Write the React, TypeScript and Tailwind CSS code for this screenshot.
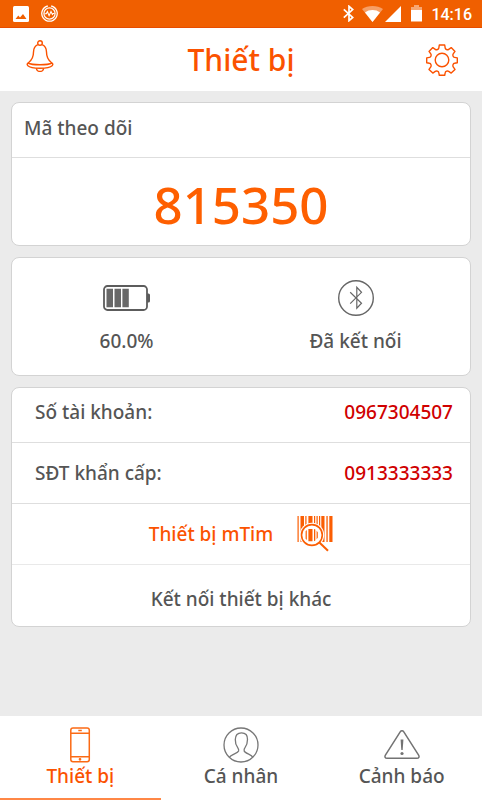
import { useState } from "react"
import type { ReactNode } from "react"

function BellIcon() {
  return (
    <svg className="w-8 h-8" viewBox="0 0 32 32" fill="none" stroke="currentColor" strokeWidth="1.4">
      <circle cx="16" cy="3" r="2.3" />
      <path d="M13.8 4.6C10.8 5.8 9.6 8.6 9.5 12c0 6-1.8 8-4.6 10.2-1.6 1.2-2.2 2.2-1.3 3.2C5.5 27.3 11 28.2 16 28.2s10.500-.9 12.400-2.800c.9-1 .3-2-1.300-3.200-2.800-2.200-4.600-4.200-4.600-10.200-.1-3.400-1.300-6.200-4.300-7.400" />
      <path d="M3.8 23c2.2 1.1 7 1.8 12.2 1.8s10-.7 12.2-1.8" />
      <path d="M12.4 28.2c.2 2 1.7 3.2 3.6 3.2s3.4-1.2 3.6-3.2" />
    </svg>
  )
}

function GearIcon() {
  return (
    <svg className="w-8 h-8" viewBox="0 0 32 32" fill="none" stroke="currentColor" strokeWidth="1.4" strokeLinejoin="round">
      <circle cx="16" cy="16" r="6.8" />
      <path d="M13.3 1h5.400l.5 3.100c.1.700.6 1.100 1.400 1.400.8.300 1.500.2 2.100-.2l2.500-1.700 3.800 3.800-1.800 2.500c-.4.600-.5 1.300-.2 2.100.3.800.8 1.300 1.500 1.400l2.800.5v4.800l-2.800.6c-.7.1-1.200.6-1.500 1.400-.3.800-.2 1.500.2 2.100l1.800 2.600-3.800 3.700-2.500-1.700c-.6-.4-1.300-.5-2.100-.2-.8.300-1.300.8-1.400 1.500l-.5 2.600h-5.400l-.5-2.600c-.1-.7-.6-1.200-1.400-1.500-.8-.3-1.500-.2-2.100.2l-2.500 1.700L3 25.400l1.800-2.600c.4-.6.5-1.300.2-2.100-.3-.8-.8-1.300-1.500-1.400L.7 18.700v-4.800l2.800-.5c.7-.1 1.200-.6 1.500-1.400.3-.8.2-1.500-.2-2.100L3 7.400l3.800-3.800 2.500 1.700c.6.400 1.300.5 2.100.2.800-.3 1.300-.7 1.400-1.400z" />
    </svg>
  )
}

function BatteryIcon() {
  return (
    <svg className="w-12 h-7" viewBox="1 0 48 28" fill="none">
      <rect x="2" y="2" width="43" height="24" rx="3.5" stroke="#5c5c5c" strokeWidth="1.8" />
      <path d="M45 9.5h1.500a1.500 1.500 0 0 1 1.500 1.500v6a1.500 1.500 0 0 1-1.500 1.500H45z" fill="#5c5c5c" />
      <path d="M4.5 4.8h6.500v18.400H4.500zM12.500 4.800H19v18.400h-6.500zM20.400 4.800h6.400v18.400h-6.400z" fill="#686868" />
    </svg>
  )
}

function BluetoothIcon() {
  return (
    <svg className="w-9 h-9" viewBox="0 0 36 36" fill="none" stroke="#666" strokeWidth="1.2">
      <circle cx="18" cy="18" r="17.3" strokeWidth="1.4" />
      <path d="M12.2 12.3 23.5 23.2l-4.700 5V7.300l4.700 5L12.200 23.700" />
    </svg>
  )
}

function BarcodeIcon() {
  return (
    <svg className="w-9 h-9" viewBox="0 0 36 36">
      <path d="M.5 0h1.200v26H.5zM3.500 0H7v26H3.500zM8.300 0h1.200v26H8.300zM11.400 0h4.100v26h-4.100zM17 0h1.200v26H17zM19.500 0h1.200v26h-1.200zM22 0h1.200v26H22zM24.300 0h3.200v26h-3.200zM29.400 0h1.300v26h-1.300zM32.300 0h3.200v26h-3.200z" fill="#fb5e03" />
      <circle cx="14.9" cy="19" r="12.3" fill="#fff" />
      <path d="M22.4 26.5 31 34.8" stroke="#fff" strokeWidth="5" />
      <circle cx="14.9" cy="19" r="10.400" fill="none" stroke="#fb5e03" strokeWidth="1.600" />
      <path d="M22.4 26.5 31 34.8" stroke="#fb5e03" strokeWidth="2" />
      <path d="M8.600 15.200 9.800 14v10l-1.200-1.200zM11.400 13h4.100v12.300h-4.100zM17 13l1.300.6v11l-1.300.6zM19.600 14.700l1.200 1.500v5.600l-1.200 1.500z" fill="#fb5e03" />
    </svg>
  )
}

function PhoneIcon() {
  return (
    <svg className="w-9 h-9" viewBox="0 0 36 36" fill="none" stroke="#fb6a14" strokeWidth="1.5">
      <rect x="8.8" y="1" width="18.5" height="33.8" rx="2.2" />
      <path d="M9 6.2h18M9 29.8h18" />
      <path d="M16.3 3.5h3.500" />
      <circle cx="18" cy="32.3" r=".6" />
    </svg>
  )
}

function PersonIcon() {
  return (
    <svg className="w-9 h-9" viewBox="0 0 36 36" fill="none" stroke="#777" strokeWidth="1.3">
      <circle cx="18" cy="18" r="17" />
      <path d="M6.4 30.2c.8-1.500 2.200-2 4.200-2.900 2.400-1.100 4.600-1.900 5-3.300.3-1.300-.2-2.400-.9-3.300-1.700-2.200-2.500-5-2.400-8.200.1-4.300 2.200-6.700 6.200-6.700 4.200 0 6.100 2.400 6 6.700 0 3.200-.9 6-2.500 8.200-.7.9-1.100 2-.8 3.300.3 1.400 2.500 2.200 4.900 3.300 1.800.8 2.900 1.400 3.600 2.800" />
    </svg>
  )
}

function WarningIcon() {
  return (
    <svg className="w-9 h-9" viewBox="0 0 36 36" fill="none" stroke="#737373" strokeWidth="1.5" strokeLinejoin="round">
      <path d="M16.2 4.800c.9-1.400 2.700-1.400 3.600 0l14.800 23.400c1 1.600.2 3-1.600 3H3c-1.800 0-2.600-1.400-1.600-3z" />
      <path d="M16.6 12.500h2.800l-.7 10.600h-1.400z" fill="#737373" stroke="none" />
      <circle cx="18" cy="26.5" r="1.6" fill="#737373" stroke="none" />
    </svg>
  )
}

function StatusBar() {
  return (
    <div className="h-7 flex items-center justify-between pl-[13px] pr-[10px] bg-[#f05f00] border-b border-[#e74c00] text-white">
      <div className="flex items-center gap-3">
        <svg className="w-4 h-4" viewBox="0 0 16 16">
          <rect width="16" height="16" rx="1.5" fill="#fff" />
          <path d="M2.5 13l2.800-3.500 1.700 2L10 8l3.500 5z" fill="#f05f00" />
        </svg>
        <svg className="w-[17px] h-[17px]" viewBox="0 0 17 17" fill="none" stroke="currentColor">
          <path d="M6.8 1A7.700 7.700 0 1 0 10.200 1" strokeWidth="1.3" />
          <circle cx="8.5" cy="8.5" r="5.6" strokeWidth="1.2" />
          <path d="M3.5 8.800h1.800L6.400 6.500l1.700 4.200L10 6.500l1.400 3 .8-1h1.300" strokeWidth="1.1" />
        </svg>
      </div>
      <div className="flex items-center">
        <svg className="w-3 h-[17px] mr-[7px]" viewBox="0 0 12 17" fill="none" stroke="currentColor" strokeWidth="1.7">
          <path d="M.8 4.300 9.700 12.400 6 15.700V1.300l3.700 3.300L.8 12.700" />
        </svg>
        <svg className="w-[21px] h-4 mr-[2px]" viewBox="0 0 21 16" fill="currentColor">
          <path d="M10.5 16 0 3C5.500-1 15.500-1 21 3z" opacity=".4" />
          <path d="M10.5 16 3 6.500c4-3.300 11-3.300 15 0z" />
        </svg>
        <svg className="w-4 h-4 mr-[10px]" viewBox="0 0 16 16" fill="currentColor">
          <path d="M0 16 16 0v16z" />
        </svg>
        <svg className="w-[11px] h-[17px] mr-[9px]" viewBox="0 0 11 17" fill="currentColor">
          <path d="M3 0h5v2h3v3H0V2h3z" opacity=".45" />
          <path d="M0 5h11v11.500H0z" />
        </svg>
        <span className="font-['Roboto'] text-base leading-5 font-medium pt-[2px]">14:16</span>
      </div>
    </div>
  )
}

function Card({ children }: { children: ReactNode }) {
  return <section className="bg-white border border-[#d3d3d3] rounded-lg">{children}</section>
}

const contacts = [
  { label: "Số tài khoản:", value: "0967304507", row: "h-[55px] pb-[6px]" },
  { label: "SĐT khẩn cấp:", value: "0913333333", row: "h-[61px]" },
]

const tabs = [
  { id: "device", label: "Thiết bị", icon: <PhoneIcon /> },
  { id: "profile", label: "Cá nhân", icon: <PersonIcon /> },
  { id: "alerts", label: "Cảnh báo", icon: <WarningIcon /> },
]

export default function App() {
  const [active, setActive] = useState("device")

  return (
    <div className="min-h-screen flex flex-col bg-[#ebebeb] font-['Noto_Sans','Open_Sans',sans-serif] font-medium text-[19px] leading-7 text-[#555]">
      <StatusBar />

      <header className="h-[63px] flex items-center justify-between px-6 bg-white text-[#fb5200]">
        <button type="button" aria-label="Thông báo" className="pb-2">
          <BellIcon />
        </button>
        <h1 className="text-[30px] leading-10">Thiết bị</h1>
        <button type="button" aria-label="Cài đặt">
          <GearIcon />
        </button>
      </header>

      <main className="flex-1 flex flex-col gap-[11px] p-[11px]">
        <Card>
          <h2 className="h-[55px] flex items-center px-3 pb-[5px] border-b border-[#dedede]">Mã theo dõi</h2>
          <p className="pt-[11px] pb-[5px] text-center text-[51px] leading-[71px] text-[#fe5f00]">815350</p>
        </Card>

        <Card>
          <div className="grid grid-cols-2 pt-[22px] pb-5">
            <div className="flex flex-col items-center gap-[11px]">
              <div className="h-9 flex items-center">
                <BatteryIcon />
              </div>
              <span>60.0%</span>
            </div>
            <div className="flex flex-col items-center gap-[11px]">
              <BluetoothIcon />
              <span>Đã kết nối</span>
            </div>
          </div>
        </Card>

        <Card>
          <dl>
            {contacts.map((c) => (
              <div key={c.label} className={`flex items-center justify-between pl-[23px] pr-[17px] border-b border-[#dedede] ${c.row}`}>
                <dt>{c.label}</dt>
                <dd className="text-[#d00000]">{c.value}</dd>
              </div>
            ))}
          </dl>
          <button type="button" className="w-full h-[61px] flex items-center justify-center gap-6 border-b border-[#e9e9e9] text-[#fb5200]">
            Thiết bị mTim
            <BarcodeIcon />
          </button>
          <button type="button" className="w-full h-[61px] flex items-center justify-center pt-[7px]">
            Kết nối thiết bị khác
          </button>
        </Card>
      </main>

      <nav className="grid grid-cols-3 bg-white leading-[26px]">
        {tabs.map((tab) => (
          <button
            key={tab.id}
            type="button"
            aria-current={active === tab.id ? "page" : undefined}
            onClick={() => setActive(tab.id)}
            className={`flex flex-col items-center pt-[11px] pb-[9px] border-b-2 ${active === tab.id ? "border-[#ff8746] text-[#fb5200]" : "border-transparent"}`}
          >
            {tab.icon}
            {tab.label}
          </button>
        ))}
      </nav>
    </div>
  )
}
